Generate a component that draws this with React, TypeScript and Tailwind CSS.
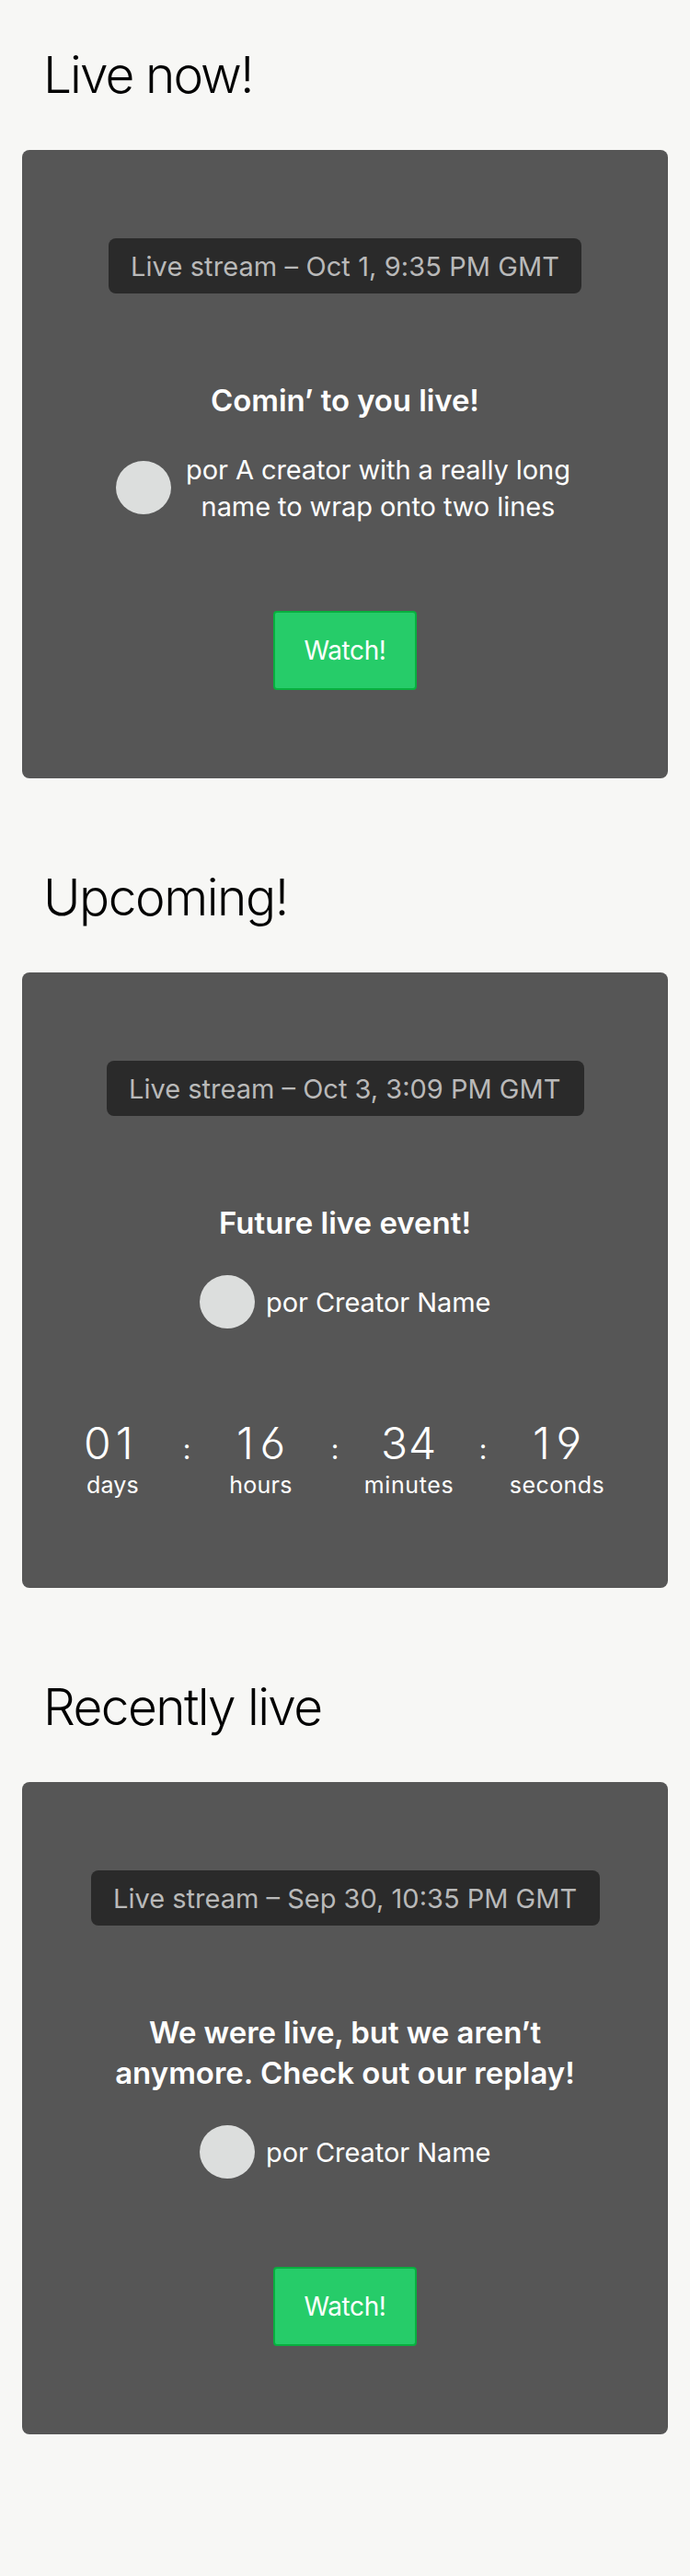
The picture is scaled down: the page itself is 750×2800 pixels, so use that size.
import React, { Fragment } from 'react';

type Props = { children?: React.ReactNode; className?: string };

function Heading({ children, className = '' }: Props) {
  return (
    <h1 className={'whitespace-nowrap pl-[23px] text-[55px] font-light leading-[64px] text-black ' + className}>
      {children}
    </h1>
  );
}

function Badge({ children, className = '' }: Props) {
  return (
    <div className={'flex h-[60px] items-center whitespace-nowrap rounded-[8px] bg-[#2a2a2a] pt-px text-[29px] text-[#b9b9b9] ' + className}>
      {children}
    </div>
  );
}

function Title({ children, className = '' }: Props) {
  return (
    <h2 className={'mt-[94px] whitespace-nowrap text-center text-[33px] font-semibold leading-[44px] ' + className}>
      {children}
    </h2>
  );
}

function Avatar({ className = '' }: Props) {
  return <div className={'h-[58px] w-[60px] shrink-0 rounded-[50%] bg-[#dcdedd] ' + className} />;
}

function Creator() {
  return (
    <div className="mt-[34px] flex h-[60px] items-center gap-3 pl-[193px]">
      <Avatar />
      <span className="whitespace-nowrap pt-px text-[29px] leading-[40px] tracking-[-0.06px]">por Creator Name</span>
    </div>
  );
}

function Watch({ className = '' }: Props) {
  return (
    <button className={'mx-auto flex h-[86px] w-[156px] items-center justify-center rounded-[4px] border-2 border-[#08af3f] bg-[#26cc69] text-[28px] tracking-[-0.4px] text-white ' + className}>
      Watch!
    </button>
  );
}

const units = [
  { value: '01', label: 'days', digits: 'pl-[35px] tracking-[5px]', tracking: 'tracking-[0.15px]' },
  { value: '16', label: 'hours', digits: 'pl-[40px] tracking-[6.5px]', tracking: 'tracking-[0.25px]' },
  { value: '34', label: 'minutes', digits: 'pl-[36px] tracking-[1px]', tracking: 'tracking-[0.6px]' },
  { value: '19', label: 'seconds', digits: 'pl-[40px] tracking-[6.5px]', tracking: 'tracking-[0.43px]' },
];

function Countdown() {
  return (
    <div className="mt-24 flex pl-8">
      {units.map((u, i) => (
        <Fragment key={u.label}>
          {i > 0 && <div className="mt-1.5 w-7 text-center text-[30px] leading-[56px]">:</div>}
          <div className="w-[133px]">
            <div className={"text-[48px] font-light leading-[56px] [font-feature-settings:'cv03','cv04'] " + u.digits}>
              {u.value}
            </div>
            <div className={'mt-0.5 text-center text-[25px] leading-[30px] ' + u.tracking}>{u.label}</div>
          </div>
        </Fragment>
      ))}
    </div>
  );
}

export default function App() {
  return (
    <main className="h-[2800px] w-[750px] overflow-hidden bg-[#f7f7f5] px-6 font-['Inter',sans-serif] text-white">
      <Heading className="h-[163px] pt-[49px] tracking-[-1.95px]">Live now!</Heading>
      <section className="h-[683px] rounded-[8px] bg-[#565656] pt-24">
        <Badge className="ml-[94px] w-[514px] pl-6 tracking-[0.09px]">Live stream – Oct 1, 9:35 PM GMT</Badge>
        <Title className="tracking-[-0.09px]">Comin’ to you live!</Title>
        <div className="mt-[34px] flex items-center gap-4 pl-[102px] text-center text-[29px] leading-[40px] tracking-[-0.08px]">
          <Avatar className="mb-0.5" />
          <span className="whitespace-nowrap">
            por A creator with a really long
            <br />
            name to wrap onto two lines
          </span>
        </div>
        <Watch className="mt-[93px]" />
      </section>

      <Heading className="h-[211px] pt-[97px] tracking-[-1.45px]">Upcoming!</Heading>
      <section className="h-[669px] rounded-[8px] bg-[#565656] pt-24">
        <Badge className="ml-[92px] w-[519px] pl-6">Live stream – Oct 3, 3:09 PM GMT</Badge>
        <Title>Future live event!</Title>
        <Creator />
        <Countdown />
      </section>

      <Heading className="h-[211px] pt-[97px] tracking-[-1.62px]">Recently live</Heading>
      <section className="h-[709px] rounded-[8px] bg-[#565656] pt-24">
        <Badge className="ml-[75px] w-[553px] pl-6">Live stream – Sep 30, 10:35 PM GMT</Badge>
        <Title>
          <span className="tracking-[-0.08px]">We were live, but we aren’t</span>
          <br />
          anymore. Check out our replay!
        </Title>
        <Creator />
        <Watch className="mt-[95px]" />
      </section>
    </main>
  );
}
